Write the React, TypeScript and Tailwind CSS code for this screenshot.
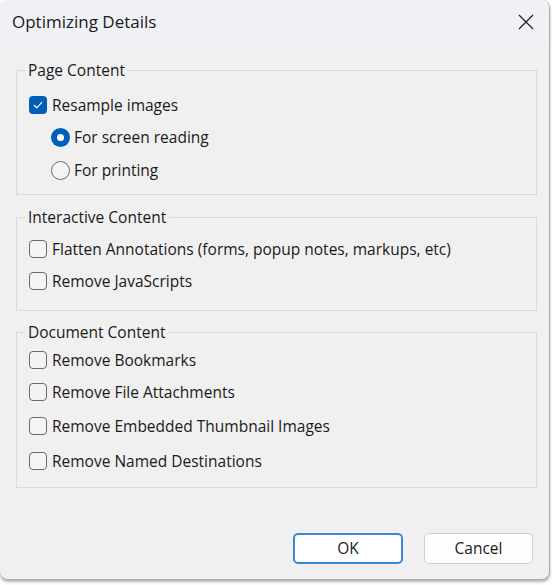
import React from "react";

const font = { fontFamily: "'Open Sans', 'Noto Sans', sans-serif" };

function Checkbox({ checked, label }: { checked?: boolean; label: string }) {
  return (
    <div className="flex h-[20px] items-center">
      {checked ? (
        <div className="flex h-[18px] w-[18px] items-center justify-center rounded-[4px] bg-[#005fb8]">
          <svg width="12" height="12" viewBox="0 0 12 12" fill="none">
            <path d="M2.2 6.3 L4.8 8.8 L9.8 3.4" stroke="#ffffff" strokeWidth="1.2" strokeLinecap="round" strokeLinejoin="round" />
          </svg>
        </div>
      ) : (
        <div className="h-[18px] w-[18px] rounded-[4px] border border-[#6b6b6b] bg-[#f4f4f4]" />
      )}
      <span className="ml-[5px] text-[15.5px] leading-[20px] text-[#1a1a1a]">{label}</span>
    </div>
  );
}

function Radio({ checked, label }: { checked?: boolean; label: string }) {
  return (
    <div className="ml-[22px] flex h-[20px] items-center">
      {checked ? (
        <div className="flex h-[19px] w-[19px] items-center justify-center rounded-full bg-[#005fb8]">
          <div className="h-[7px] w-[7px] rounded-full bg-white" />
        </div>
      ) : (
        <div className="h-[19px] w-[19px] rounded-full border border-[#6b6b6b] bg-[#f4f4f4]" />
      )}
      <span className="ml-[4px] text-[15.5px] leading-[20px] text-[#1a1a1a]">{label}</span>
    </div>
  );
}

function Group({ title, className, children }: { title: string; className: string; children: React.ReactNode }) {
  return (
    <fieldset className={`ml-[16px] w-[521px] border border-[#dadada] pl-[12px] ${className}`}>
      <legend className="ml-[-4px] px-[3px] text-[15.5px] leading-[20px] text-[#1a1a1a]">{title}</legend>
      {children}
    </fieldset>
  );
}

export default function App() {
  return (
    <div className="h-[585px] w-[552px] bg-white" style={font}>
      <div className="flex h-[580px] w-[550px] flex-col overflow-hidden rounded-[8px] border-r border-b border-[#a9a9a9] bg-[#f0f0f0] shadow-[0_2px_3px_rgba(0,0,0,0.3)]">
        <div className="flex h-[44px] items-center justify-between bg-[#eff1f5] pl-[12px] pr-[15px]">
          <span className="text-[17px] leading-[20px] text-[#1a1a1a]">Optimizing Details</span>
          <svg width="16" height="16" viewBox="0 0 16 16" fill="none">
            <path d="M1 1 L15 15 M15 1 L1 15" stroke="#1a1a1a" strokeWidth="1.1" />
          </svg>
        </div>

        <Group title="Page Content" className="mt-[16px] pt-[15px] pb-[14px]">
          <Checkbox checked label="Resample images" />
          <div className="mt-[12px]">
            <Radio checked label="For screen reading" />
          </div>
          <div className="mt-[13px]">
            <Radio label="For printing" />
          </div>
        </Group>

        <Group title="Interactive Content" className="mt-[12px] pt-[12px] pb-[19px]">
          <Checkbox label="Flatten Annotations (forms, popup notes, markups, etc)" />
          <div className="mt-[12px]">
            <Checkbox label="Remove JavaScripts" />
          </div>
        </Group>

        <Group title="Document Content" className="mt-[11px] pt-[8px] pb-[16px]">
          <Checkbox label="Remove Bookmarks" />
          <div className="mt-[12px]">
            <Checkbox label="Remove File Attachments" />
          </div>
          <div className="mt-[14px]">
            <Checkbox label="Remove Embedded Thumbnail Images" />
          </div>
          <div className="mt-[15px]">
            <Checkbox label="Remove Named Destinations" />
          </div>
        </Group>

        <div className="mt-[45px] flex justify-end gap-[21px] pr-[16px]">
          <button className="flex h-[31px] w-[110px] items-center justify-center rounded-[5px] border-2 border-[#3d87d6] bg-white text-[15.5px] text-[#1a1a1a]">
            OK
          </button>
          <button className="flex h-[31px] w-[109px] items-center justify-center rounded-[5px] border border-[#cfcfcf] bg-[#fdfdfd] text-[15.5px] text-[#1a1a1a]">
            Cancel
          </button>
        </div>
      </div>
    </div>
  );
}
